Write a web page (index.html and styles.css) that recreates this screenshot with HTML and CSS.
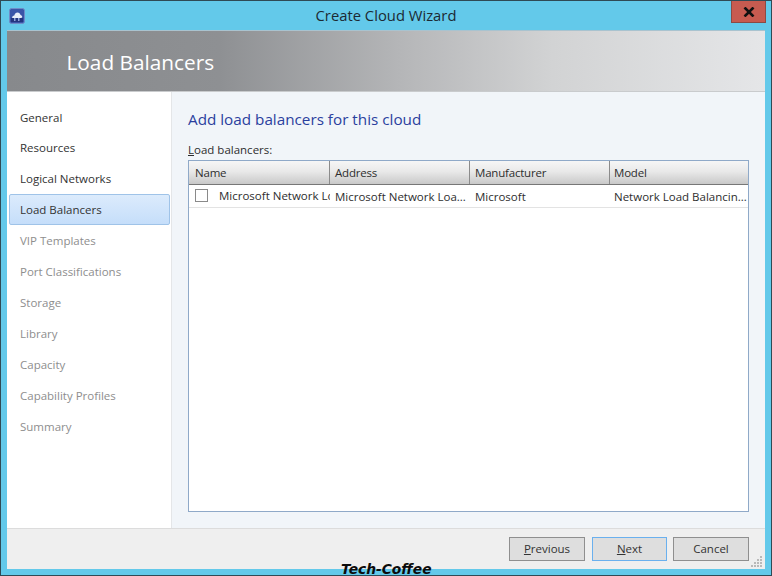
FILE: index.html
```html
<!DOCTYPE html>
<html lang="en">
<head>
<meta charset="utf-8">
<title>Create Cloud Wizard</title>
<link rel="stylesheet" href="styles.css">
</head>
<body>
<div class="window">
  <div class="titlebar">
    <svg class="app-icon" width="16" height="16" viewBox="0 0 16 16">
      <rect x="0.5" y="0.5" width="15" height="15" rx="2" fill="#3a55a8" stroke="#6f8cc8"/>
      <rect x="2" y="10" width="12" height="4" fill="#24357f"/>
      <path d="M3 10c0-1.500 1-2.500 2.300-2.500C5.800 5.500 7 4.500 8.500 4.500c1.600 0 2.700 1 3 2.500 1 .1 1.700 1 1.700 1.800 0 .7-.4 1.200-1 1.200H4c-.6 0-1-.2-1-.5z" fill="#e8edf8"/>
      <rect x="5" y="10" width="1.500" height="3" fill="#8fa6dc"/>
      <rect x="9" y="10" width="1.500" height="3" fill="#8fa6dc"/>
    </svg>
    <div class="title">Create Cloud Wizard</div>
    <div class="close"><svg width="12" height="10" viewBox="0 0 12 10"><path d="M1.500 0.500 L10.500 9.500 M10.500 0.500 L1.500 9.500" stroke="#111" stroke-width="2.600" fill="none"/></svg></div>
  </div>
  <div class="client">
    <header class="banner">Load Balancers</header>
    <div class="middle">
      <nav class="nav">
        <div class="step">General</div>
        <div class="step">Resources</div>
        <div class="step">Logical Networks</div>
        <div class="step step-current">Load Balancers</div>
        <div class="step step-off">VIP Templates</div>
        <div class="step step-off">Port Classifications</div>
        <div class="step step-off">Storage</div>
        <div class="step step-off">Library</div>
        <div class="step step-off">Capacity</div>
        <div class="step step-off">Capability Profiles</div>
        <div class="step step-off">Summary</div>
      </nav>
      <main class="main">
        <h1 class="heading">Add load balancers for this cloud</h1>
        <div class="list-label"><u>L</u>oad balancers:</div>
        <div class="grid">
          <div class="grid-head">
            <div class="col col-name">Name</div>
            <div class="col col-addr">Address</div>
            <div class="col col-man">Manufacturer</div>
            <div class="col col-model">Model</div>
          </div>
          <div class="grid-row">
            <div class="cell cell-name"><span class="checkbox"></span><span class="clip">Microsoft Network Load Balancing</span></div>
            <div class="cell col-addr">Microsoft Network Loa...</div>
            <div class="cell col-man">Microsoft</div>
            <div class="cell col-model">Network Load Balancin...</div>
          </div>
        </div>
      </main>
    </div>
    <footer class="footer">
      <button class="btn"><u>P</u>revious</button>
      <button class="btn btn-default"><u>N</u>ext</button>
      <button class="btn">Cancel</button>
      <svg class="grip" width="12" height="12" viewBox="0 0 12 12" fill="#b9b9b9">
        <rect x="9" y="0" width="2" height="2"/><rect x="9" y="3" width="2" height="2"/><rect x="6" y="3" width="2" height="2"/>
        <rect x="9" y="6" width="2" height="2"/><rect x="6" y="6" width="2" height="2"/><rect x="3" y="6" width="2" height="2"/>
        <rect x="9" y="9" width="2" height="2"/><rect x="6" y="9" width="2" height="2"/><rect x="3" y="9" width="2" height="2"/><rect x="0" y="9" width="2" height="2"/>
      </svg>
    </footer>
  </div>
</div>
<div class="watermark">Tech-Coffee</div>
</body>
</html>
```
FILE: styles.css
```css
* { box-sizing: border-box; }
html, body { margin: 0; padding: 0; }
body {
  width: 772px;
  height: 576px;
  overflow: hidden;
  position: relative;
  font-family: "Open Sans", "Noto Sans", sans-serif;
  font-size: 11.500px;
  color: #2e2e2e;
}
.window {
  width: 772px;
  height: 576px;
  background: #63c9ea;
  border: 1px solid #2f4a55;
  display: flex;
  flex-direction: column;
  padding: 0 6px 6px;
}
.titlebar {
  height: 29px;
  flex: none;
  display: flex;
  align-items: flex-start;
  position: relative;
}
.app-icon { margin: 7px 0 0 2px; }
.title {
  position: absolute;
  left: 0;
  right: 0;
  top: 4px;
  text-align: center;
  font-size: 14.800px;
  line-height: 20px;
  color: #1c2a33;
}
.close {
  position: absolute;
  right: -1px;
  top: 0;
  width: 35px;
  height: 22px;
  background: #c75b50;
  border: 1px solid #8c4a44;
  border-top: none;
  display: flex;
  align-items: center;
  justify-content: center;
}
.client {
  flex: 1;
  display: flex;
  flex-direction: column;
  min-height: 0;
  background: #fff;
}
.banner {
  height: 62px;
  flex: none;
  background: linear-gradient(90deg, #87898c 0%, #8e9093 28%, #b5b6b8 52%, #d2d3d4 72%, #e5e6e8 100%);
  border-top: 1px solid #a9c3cf;
  border-bottom: 1px solid #c9cbcd;
  color: #fff;
  font-size: 20.800px;
  line-height: 62px;
  padding-left: 59.500px;
}
.middle { flex: 1; display: flex; min-height: 0; }
.nav {
  width: 165px;
  flex: none;
  background: #fff;
  border-right: 1px solid #e4e6e8;
  padding: 9.500px 1px 0 2px;
  display: flex;
  flex-direction: column;
}
.step {
  height: 30.950px;
  line-height: 31px;
  padding-left: 11px;
  color: #333;
  flex: none;
}
.step-current {
  background: linear-gradient(180deg, #dcebfc 0%, #c5defa 100%);
  border: 1px solid #9fc3e8;
  border-radius: 2px;
  padding-left: 10px;
  line-height: 29px;
}
.step-off { color: #8e8e8e; }
.main {
  flex: 1;
  min-width: 0;
  background: #f1f5f9;
  padding: 15px 16px 16px;
  display: flex;
  flex-direction: column;
}
.heading {
  margin: 0;
  font-size: 15.250px;
  font-weight: 400;
  line-height: 24px;
  color: #2b3f9e;
}
.list-label { margin-top: 11px; line-height: 16px; height: 16px; }
.grid {
  flex: 1;
  margin-top: 2px;
  background: #fff;
  border: 1px solid #8fa9c8;
  display: flex;
  flex-direction: column;
}
.grid-head {
  height: 24px;
  flex: none;
  display: flex;
  background: linear-gradient(180deg, #f6f6f6 0%, #e9e9e9 45%, #c9c9c9 100%);
  border-bottom: 1px solid #777;
}
.col {
  line-height: 24px;
  border-right: 1px solid #8b8b8b;
  padding-left: 5px;
  flex: none;
  letter-spacing: -0.2px;
}
.col-name { width: 141px; padding-left: 6px; }
.col-addr { width: 140px; }
.col-man { width: 140px; }
.col-model { width: 138px; border-right: none; padding-left: 4px; }
.grid-row {
  height: 23px;
  flex: none;
  display: flex;
  border-bottom: 1px solid #e3e3e3;
}
.cell {
  line-height: 24px;
  padding-left: 5px;
  flex: none;
  white-space: nowrap;
  overflow: hidden;
}
.col-model.cell { padding-left: 4px; }
.cell-name { width: 141px; padding-left: 6px; display: flex; align-items: center; }
.checkbox {
  width: 13px;
  height: 13px;
  flex: none;
  background: #fff;
  border: 1px solid #8a8a8a;
  margin: 0 11px 2px 0;
}
.clip { overflow: hidden; white-space: nowrap; line-height: 20px; margin-bottom: 1px; }
.footer {
  height: 41px;
  flex: none;
  background: #efefef;
  border-top: 1px solid #dcdcdc;
  display: flex;
  justify-content: flex-end;
  align-items: flex-start;
  gap: 6px;
  padding: 8px 16px 0 0;
  position: relative;
}
.btn {
  width: 76px;
  height: 24px;
  padding: 0;
  background: #dedede;
  border: 1px solid #8f8f8f;
  font: inherit;
  color: #333;
  line-height: 22px;
}
.btn-default { width: 75px; margin-left: 1px; border-color: #6ab0ee; }
.grip { position: absolute; right: 2px; bottom: 1px; }
.watermark {
  position: absolute;
  left: 341px;
  top: 561px;
  font-family: "DejaVu Sans", sans-serif;
  font-size: 13.800px;
  font-weight: 700;
  font-style: italic;
  line-height: 16px;
  color: #0c0c0c;
  white-space: nowrap;
}
```
